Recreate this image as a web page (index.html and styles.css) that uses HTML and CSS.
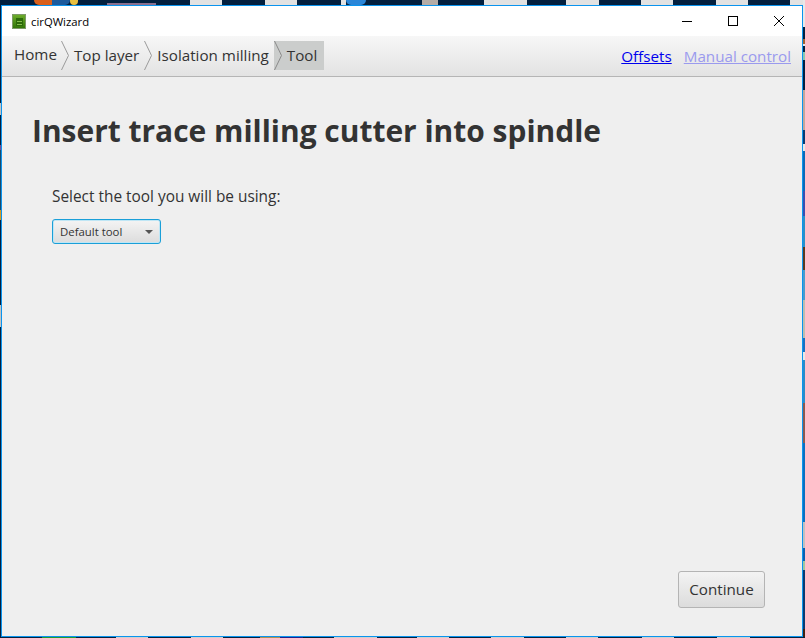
FILE: index.html
```html
<!DOCTYPE html>
<html lang="en">
<head>
  <meta charset="UTF-8">
  <title>cirQWizard</title>
  <link rel="stylesheet" href="styles.css">
</head>
<body>

<!-- bits of the desktop showing behind the window -->
<div class="desktop">
  <span class="tile tile-orange"></span>
  <span class="tile tile-ie"></span>
  <span class="tile tile-yellow"></span>
  <span class="tile tile-purple"></span>
  <span class="tile tile-light t1"></span>
  <span class="tile tile-light t2"></span>
  <span class="tile tile-light t3"></span>
  <span class="tile tile-blue"></span>
  <span class="tile tile-grey"></span>
  <span class="tile tile-light t4"></span>
  <span class="tile tile-light t5"></span>
  <span class="tile tile-light t6"></span>
  <span class="tile tile-light t7"></span>
  <span class="tile tile-light t8"></span>
  <span class="edge edge-left"></span>
  <span class="edge edge-right"></span>
  <span class="edge edge-bottom"></span>
</div>

<div class="window">
  <div class="titlebar">
    <svg class="app-icon" width="14" height="15" viewBox="0 0 14 15">
      <defs>
        <linearGradient id="icon-green" x1="0" y1="0" x2="0" y2="1">
          <stop offset="0" stop-color="#6fae2c"/>
          <stop offset="1" stop-color="#2f7406"/>
        </linearGradient>
      </defs>
      <rect x="0.5" y="0.5" width="13" height="14" fill="url(#icon-green)" stroke="#7d9a68"/>
      <rect x="4" y="4" width="7" height="8" fill="#2c6a0a"/>
      <rect x="5" y="7" width="5" height="1" fill="#86bf4e"/>
      <rect x="5" y="10" width="5" height="1" fill="#86bf4e"/>
    </svg>
    <span class="app-name">cirQWizard</span>
    <div class="win-buttons">
      <svg width="12" height="12" viewBox="0 0 12 12"><path d="M1 6.5h10" stroke="#000" fill="none"/></svg>
      <svg width="12" height="12" viewBox="0 0 12 12"><rect x="1.5" y="1.5" width="9" height="9" stroke="#000" fill="none"/></svg>
      <svg width="12" height="12" viewBox="0 0 12 12"><path d="M1 1l10 10M11 1L1 11" stroke="#000" fill="none"/></svg>
    </div>
  </div>

  <div class="toolbar">
    <div class="crumbs">
      <span class="crumb first">Home</span>
      <svg class="chevron" width="8" height="29" viewBox="0 0 8 29"><path d="M0.5 0L7.5 14.5L0.5 29" stroke="#9a9a9a" fill="none"/></svg>
      <span class="crumb">Top layer</span>
      <svg class="chevron" width="8" height="29" viewBox="0 0 8 29"><path d="M0.5 0L7.5 14.5L0.5 29" stroke="#9a9a9a" fill="none"/></svg>
      <span class="crumb">Isolation milling</span>
      <div class="current">
        <svg class="chevron" width="8" height="29" viewBox="0 0 8 29"><path d="M0.5 0L7.5 14.5L0.5 29" stroke="#8a8a8a" fill="none"/></svg>
        <span class="crumb">Tool</span>
      </div>
    </div>
    <div class="links">
      <a href="#">Offsets</a>
      <a href="#" class="disabled">Manual control</a>
    </div>
  </div>

  <div class="content">
    <h1>Insert trace milling cutter into spindle</h1>
    <div class="tool-form">
      <p>Select the tool you will be using:</p>
      <div class="combo">
        <span>Default tool</span>
        <i class="arrow"></i>
      </div>
    </div>
    <div class="footer">
      <button>Continue</button>
    </div>
  </div>
</div>

</body>
</html>
```

FILE: styles.css
```css
* { margin: 0; padding: 0; box-sizing: border-box; }

html, body { height: 100%; }

body {
  font-family: "Open Sans", "Noto Sans", sans-serif;
  background: #03203f;
  color: #333;
  padding: 5px 2px 1px 1px;
  overflow: hidden;
}

/* Desktop behind the window */
.desktop {
  position: absolute;
  left: 0;
  top: 0;
  width: 100%;
  height: 100%;
}

.tile { position: absolute; top: 0; height: 5px; }
.tile-orange { left: 34px; width: 18px; background: #d9601c; border-radius: 0 0 0 8px; }
.tile-ie { left: 52px; width: 18px; background: #1c5a9c; border-radius: 0 0 8px 0; }
.tile-yellow { left: 70px; width: 8px; background: #e8c040; border-radius: 0 0 4px 4px; }
.tile-purple { left: 107px; width: 49px; top: 3px; height: 2px; background: #8a6f8e; }
.tile-blue { left: 346px; width: 20px; background: #2a86d8; border-radius: 0 0 10px 10px; }
.tile-grey { left: 422px; width: 16px; background: #b5aca6; }
.tile-light { background: #e2e2e2; }
.t1 { left: 190px; width: 32px; }
.t2 { left: 265px; width: 32px; }
.t3 { left: 341px; width: 5px; }
.t4 { left: 484px; width: 43px; }
.t5 { left: 566px; width: 33px; }
.t6 { left: 641px; width: 32px; }
.t7 { left: 716px; width: 32px; }
.t8 { left: 790px; width: 15px; }

.edge { position: absolute; }

.edge-left {
  left: 0;
  top: 0;
  width: 1px;
  height: 100%;
  background: linear-gradient(#03203f 0 103px, #c4c4c4 103px 115px, #03203f 115px 145px, #7a4a90 145px 150px,
    #1a4a6a 150px 210px, #d89a20 210px 220px, #03203f 220px 305px, #c4c4c4 305px 327px, #03203f 327px);
}

.edge-right {
  right: 0;
  top: 0;
  width: 2px;
  height: 100%;
  background: linear-gradient(#e8e8e8 0 27px, #03203f 27px 39px, #a06030 39px 44px, #e8e8e8 44px 46px, #03203f 46px 52px,
    #8cc8b0 52px 60px, #03203f 60px 90px, #c4a69a 90px 130px, #0a3a70 130px 144px, #e8e8e8 144px 151px,
    #0b6ab8 151px 191px, #3a4fb0 191px 216px, #2a90c8 216px 247px, #5a3a20 247px 270px, #4a9ccc 270px 300px,
    #bdbdb0 300px 338px, #1a70c0 338px 352px, #e8e8e8 352px 360px, #2a8cc8 360px 403px, #8a5a50 403px 443px,
    #0a70c0 443px 522px, #c0c0c0 522px 548px, #0a60b0 548px 561px, #a0c8a0 561px 570px, #0a3a70 570px 629px, #402010 629px);
}

.edge-bottom {
  left: 0;
  bottom: 0;
  width: 100%;
  height: 1px;
  background: linear-gradient(90deg, #03203f 0 42px, #1f9a30 42px 76px, #03203f 76px 116px, #d0d0d0 116px 148px,
    #03203f 148px 191px, #d0d0d0 191px 223px, #03203f 223px 260px, #b09050 260px 280px, #20208a 280px 303px,
    #03203f 303px 334px, #d0d0d0 334px 377px, #03203f 377px 417px, #d0d0d0 417px 449px, #03203f 449px 491px,
    #d0d0d0 491px 524px, #03203f 524px 566px, #d0d0d0 566px 598px, #03203f 598px 642px, #d0d0d0 642px 674px,
    #03203f 674px 717px, #d0d0d0 717px 750px, #03203f 750px);
}

/* Window */
.window {
  position: relative;
  height: 100%;
  display: flex;
  flex-direction: column;
  border: 1px solid #0a94ee;
  background: #efefef;
}

.titlebar {
  display: flex;
  align-items: center;
  height: 30px;
  padding-left: 10px;
  background: #fff;
  color: #000;
}

.app-icon { margin-right: 5px; }

.app-name { font-size: 11.3px; }

.win-buttons {
  margin-left: auto;
  display: flex;
  gap: 34px;
  padding-right: 17px;
}

/* Breadcrumbs */
.toolbar {
  display: flex;
  align-items: center;
  justify-content: space-between;
  height: 41px;
  padding: 0 11px 0 12px;
  background: linear-gradient(#f7f7f7, #e3e3e3);
  border-bottom: 1px solid #b5b5b5;
}

.crumbs {
  display: flex;
  align-items: center;
  gap: 5px;
  height: 29px;
  margin-top: -1px;
  font-size: 15.2px;
}

.crumb { display: block; white-space: nowrap; margin-top: -2px; }
.crumb.first { margin: -4px -1px 0 0; }

.chevron { display: block; flex: none; }

.current {
  display: flex;
  align-items: center;
  gap: 5px;
  height: 29px;
  padding-right: 7px;
  background: #cbcdcc;
}

.links { display: flex; gap: 12px; font-size: 15.2px; margin-top: -1px; }
.links a { color: #0000ee; }
.links a.disabled { color: #9a9aee; }

/* Main page */
.content {
  flex: 1;
  display: flex;
  flex-direction: column;
  padding: 32px 37px 28px 30px;
}

h1 {
  font-size: 29.95px;
  font-weight: 700;
  line-height: 44px;
}

.tool-form { padding: 33px 0 0 20px; }

.tool-form p { font-size: 15.4px; line-height: 22px; margin-bottom: 11px; }

.combo {
  display: flex;
  align-items: center;
  justify-content: space-between;
  width: 109px;
  height: 25px;
  padding: 0 7px;
  font-size: 11.4px;
  background: linear-gradient(#f4f4f4, #dcdcdc);
  border: 1px solid #1a9fd8;
  border-radius: 3px;
  box-shadow: 0 0 0 1px #bfe6f5 inset;
}

.arrow {
  width: 0;
  height: 0;
  border-left: 4px solid transparent;
  border-right: 4px solid transparent;
  border-top: 4px solid #555;
}

.footer {
  margin-top: auto;
  display: flex;
  justify-content: flex-end;
}

button {
  width: 87px;
  height: 37px;
  padding-bottom: 2px;
  font: inherit;
  font-size: 15.2px;
  color: #333;
  background: linear-gradient(#f3f3f3, #dcdcdc);
  border: 1px solid #b4b4b4;
  border-radius: 3px;
}
```
